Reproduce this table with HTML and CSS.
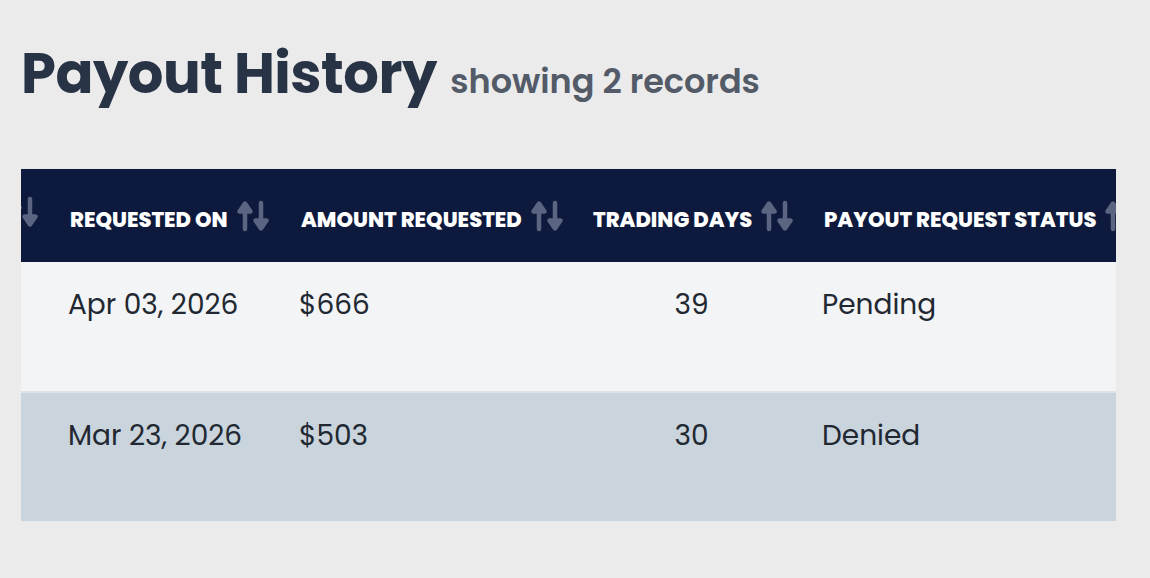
FILE: index.html
```html
<!DOCTYPE html>
<html>
<head>
  <title>Payout History</title>
  <link rel="stylesheet" href="styles.css">
</head>
<body>

<div class="page">
  <h1 class="title">Payout History <span class="count">showing 2 records</span></h1>

  <div class="table-wrap">
    <table class="payouts">
      <colgroup>
        <col class="col-id">
        <col class="col-date">
        <col class="col-amount">
        <col class="col-days">
        <col class="col-status">
      </colgroup>
      <thead>
        <tr>
          <th><span class="th-in"><svg class="sort" viewBox="0 0 32 32"><path d="M8 29V10M2.5 11.5L8 3.5l5.5 8z"/><path d="M24 3v19M18.5 20.5L24 28.5l5.5-8z"/></svg></span></th>
          <th><span class="th-in"><span class="th-label">REQUESTED ON</span> <svg class="sort" viewBox="0 0 32 32"><path d="M8 29V10M2.5 11.5L8 3.5l5.5 8z"/><path d="M24 3v19M18.5 20.5L24 28.5l5.5-8z"/></svg></span></th>
          <th><span class="th-in"><span class="th-label">AMOUNT REQUESTED</span> <svg class="sort" viewBox="0 0 32 32"><path d="M8 29V10M2.5 11.5L8 3.5l5.5 8z"/><path d="M24 3v19M18.5 20.5L24 28.5l5.5-8z"/></svg></span></th>
          <th><span class="th-in"><span class="th-label">TRADING DAYS</span> <svg class="sort" viewBox="0 0 32 32"><path d="M8 29V10M2.5 11.5L8 3.5l5.5 8z"/><path d="M24 3v19M18.5 20.5L24 28.5l5.5-8z"/></svg></span></th>
          <th><span class="th-in"><span class="th-label">PAYOUT REQUEST STATUS</span> <svg class="sort" viewBox="0 0 32 32"><path d="M8 29V10M2.5 11.5L8 3.5l5.5 8z"/><path d="M24 3v19M18.5 20.5L24 28.5l5.5-8z"/></svg></span></th>
        </tr>
      </thead>
      <tbody>
        <tr>
          <td></td>
          <td>Apr 03, 2026</td>
          <td>$666</td>
          <td class="num">39</td>
          <td>Pending</td>
        </tr>
        <tr>
          <td></td>
          <td>Mar 23, 2026</td>
          <td>$503</td>
          <td class="num">30</td>
          <td>Denied</td>
        </tr>
      </tbody>
    </table>
  </div>
</div>

</body>
</html>
```

FILE: styles.css
```css
body {
  margin: 0;
  background-color: #ebebeb;
  font-family: Poppins, "Inter", sans-serif;
  color: #222831;
}
.page {
  padding: 40px 34px 40px 21px;
}
.title {
  margin: 0 0 53px 0;
  font-size: 56px;
  line-height: 68px;
  font-weight: 700;
  color: #283345;
  letter-spacing: -0.5px;
}
.title .count {
  font-size: 33.5px;
  font-weight: 600;
  color: #535b69;
  letter-spacing: 0;
  margin-left: 2px;
}
.table-wrap {
  overflow: hidden;
  background-color: #f3f4f6;
}
.payouts {
  border-collapse: collapse;
  table-layout: fixed;
  width: 1450px;
  margin-left: -162px;
}
.col-id { width: 195px; }
.col-date { width: 231px; }
.col-amount { width: 292px; }
.col-days { width: 231px; }
.col-status { width: 501px; }
.payouts th {
  background-color: #0d1a3d;
  color: #ffffff;
  height: 93px;
  padding: 0 16px;
  text-align: left;
  font-size: 21px;
  font-weight: 800;
  white-space: nowrap;
}
.payouts th:first-child {
  text-align: right;
}
.th-in {
  display: inline-flex;
  align-items: center;
  gap: 9px;
}
.th-label {
  padding-top: 7px;
}
.sort {
  width: 32px;
  height: 32px;
  fill: #5b6581;
  stroke: #5b6581;
  stroke-width: 4.5;
  stroke-linecap: round;
  stroke-linejoin: round;
}
.payouts td {
  height: 130px;
  padding: 27px 16px 0 14px;
  box-sizing: border-box;
  vertical-align: top;
  font-size: 28px;
  line-height: 32px;
  white-space: nowrap;
}
.payouts td.num {
  text-align: center;
}
.payouts tbody tr:first-child td {
  background-color: #f3f4f6;
  border-bottom: 2px solid #dfe3e8;
}
.payouts tbody tr:nth-child(2) td {
  background-color: #cad4dd;
  height: 129px;
}
```
